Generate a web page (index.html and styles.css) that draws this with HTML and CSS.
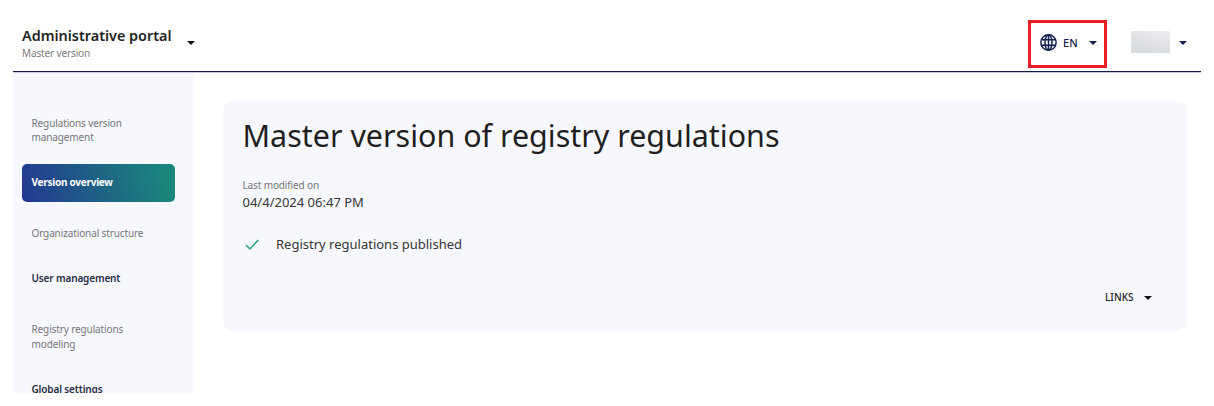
FILE: index.html
```html
<!DOCTYPE html>
<html lang="en">
<head>
<meta charset="utf-8">
<title>Administrative portal</title>
<link rel="stylesheet" href="styles.css">
</head>
<body>
<div class="app">
  <header class="header">
    <div class="brand">
      <div>
        <div class="brand-name">Administrative portal</div>
        <div class="brand-sub">Master version</div>
      </div>
      <svg class="caret dark" viewBox="0 0 8 4"><path d="M0 0h8L4 4z"/></svg>
    </div>
    <div class="lang">
      <svg class="globe" viewBox="0 0 16 16"><circle cx="8" cy="8" r="7.2"/><ellipse cx="8" cy="8" rx="3.3" ry="7.2"/><path d="M1.3 5.4h13.4M1.3 10.6h13.4M8 .8v14.4"/></svg>
      <span class="lang-code">EN</span>
      <svg class="caret" viewBox="0 0 8 4"><path d="M0 0h8L4 4z"/></svg>
    </div>
    <div class="user">
      <span class="user-name"></span>
      <svg class="caret" viewBox="0 0 8 4"><path d="M0 0h8L4 4z"/></svg>
    </div>
  </header>
  <div class="body">
    <nav class="sidebar">
      <div class="group first">Regulations version management</div>
      <div class="active">Version overview</div>
      <div class="group org">Organizational structure</div>
      <div class="item">User management</div>
      <div class="group modeling">Registry regulations modeling</div>
      <div class="item last">Global settings</div>
    </nav>
    <main class="main">
      <section class="card">
        <h1 class="title">Master version of registry regulations</h1>
        <div class="label">Last modified on</div>
        <div class="value">04/4/2024 06:47 PM</div>
        <div class="status">
          <svg class="check" viewBox="0 0 14 12"><path d="M1 6l4 4 8.3-9"/></svg>
          <span class="status-text">Registry regulations published</span>
        </div>
        <div class="links">
          <span class="links-text">LINKS</span>
          <svg class="caret dark" viewBox="0 0 8 4"><path d="M0 0h8L4 4z"/></svg>
        </div>
      </section>
    </main>
  </div>
</div>
</body>
</html>
```
FILE: styles.css
```css
* { box-sizing: border-box; }
body { margin: 0; background: #fff; font-family: "Noto Sans", sans-serif; color: #1f1f1f; }
.app { width: 1188px; height: 393px; margin-left: 13px; overflow: hidden; display: flex; flex-direction: column; }
.header { height: 73px; flex: none; display: flex; align-items: flex-start; border-bottom: 1px solid #c9cbe0; box-shadow: inset 0 -1px #131840; padding-left: 9px; }
.brand { display: flex; padding-top: 26px; margin-right: auto; }
.brand-name { width: 152px; font-size: 14.4px; font-weight: 600; line-height: 20px; white-space: nowrap; }
.brand-sub { font-size: 10px; letter-spacing: -0.13px; line-height: 14px; color: #7b7b80; }
.brand .caret { margin: 15px 0 0 13px; }
.caret { width: 8px; height: 4px; fill: #14204f; flex: none; }
.dark { fill: #111; }
.lang { width: 79px; height: 48px; margin-top: 20px; border: 3px solid #ee1c25; display: flex; align-items: center; padding: 0 7px 2px 9px; }
.globe { width: 17px; height: 17px; margin-top: -1px; fill: none; stroke: #14204f; stroke-width: 1.4; }
.lang-code { font-size: 11px; font-weight: 500; line-height: 16px; margin: 0 auto 0 6px; color: #14204f; }
.user { display: flex; align-items: center; margin: 31px 14px 0 24px; height: 22px; }
.user-name { width: 39px; height: 22px; margin-right: 9px; background: linear-gradient(15deg, #d5d9dc, #dfe1e4 50%, #eeeff2); }
.user .caret { margin-top: 2px; }
.body { display: flex; flex: 1; min-height: 0; }
.sidebar { width: 181px; background: #f7f8fd; padding: 43px 19px 0 9px; overflow: hidden; font-size: 10px; letter-spacing: -0.12px; line-height: 14px; }
.group { padding: 0 30px 0 9.5px; color: #75757a; }
.active { margin-top: 20px; height: 38px; padding-left: 9.5px; line-height: 36px; color: #fff; font-weight: 700; letter-spacing: -0.26px; border-radius: 5px; background: linear-gradient(75deg, #233891, #1a867b 92%); }
.org { margin-top: 24px; padding-right: 0; }
.item { margin-top: 31px; padding-left: 9.5px; font-weight: 600; letter-spacing: -0.14px; color: #252b45; }
.modeling { margin-top: 37px; line-height: 14.5px; }
.last { margin-top: 31px; }
.main { flex: 1; padding: 28px 14px 0 29px; }
.card { height: 230px; padding: 14px 35px 0 19.5px; background: #f7f8fd; border-radius: 10px; }
.title { margin: 0; font-size: 30.45px; font-weight: 400; line-height: 40px; white-space: nowrap; }
.label { margin-top: 23px; font-size: 10px; letter-spacing: -0.13px; line-height: 14px; color: #75757a; }
.value { font-size: 13px; line-height: 20px; color: #353535; }
.status { display: flex; align-items: center; margin-top: 23px; height: 20px; padding-left: 2px; }
.check { width: 14px; height: 12px; fill: none; stroke: #23a279; stroke-width: 1.5; }
.status-text { margin: -2px 0 0 17.5px; font-size: 13px; line-height: 20px; color: #353535; }
.links { display: flex; align-items: center; justify-content: flex-end; gap: 10.5px; margin-top: 34px; height: 18px; }
.links-text { margin-top: -2px; font-size: 10px; font-weight: 500; line-height: 16px; }
```
